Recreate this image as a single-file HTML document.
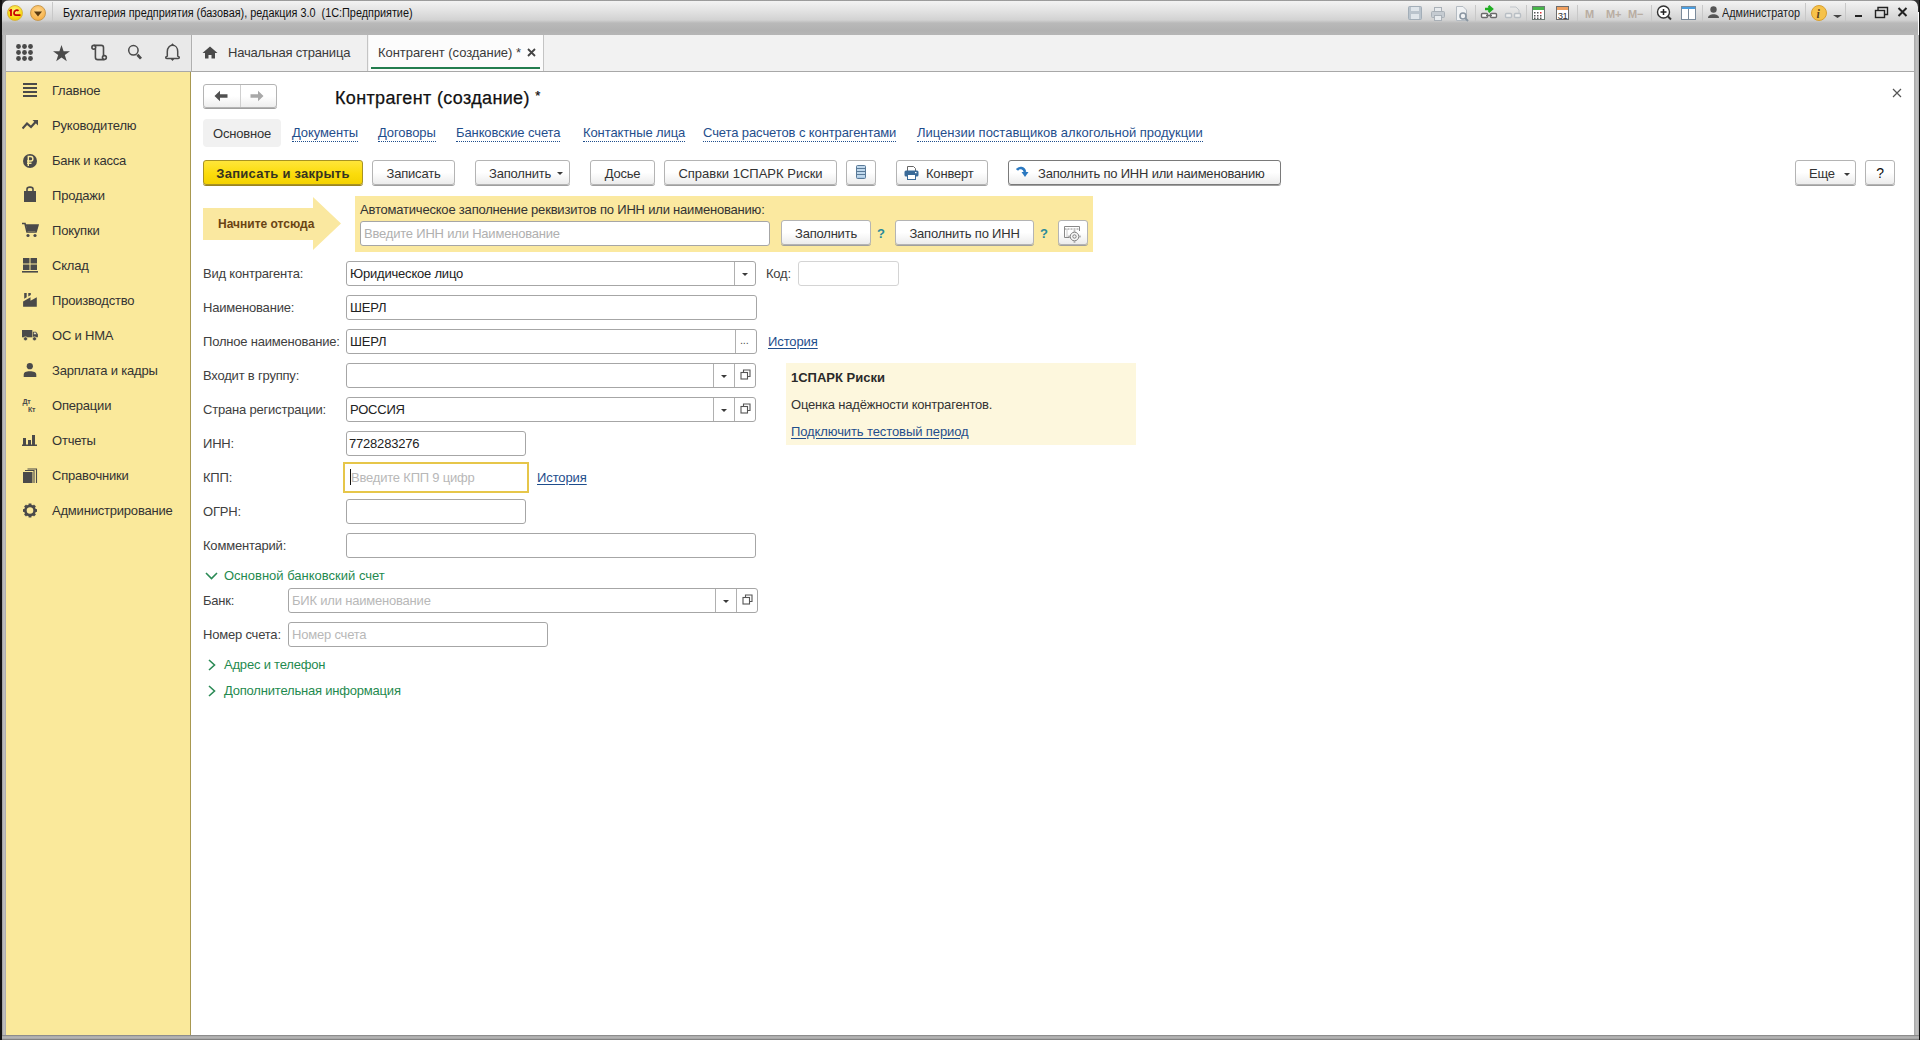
<!DOCTYPE html>
<html><head><meta charset="utf-8">
<style>
*{box-sizing:border-box;margin:0;padding:0}
html,body{width:1920px;height:1040px;overflow:hidden;background:#fff;font-family:"Liberation Sans",sans-serif;font-size:13px;color:#404040;letter-spacing:-0.2px}
.a{position:absolute}
#frameL{left:0;top:35px;width:6px;height:1005px;background:linear-gradient(to right,#111 0,#111 2px,#9a9a9a 2px,#c4c4c4 4px,#a8a8a8 6px)}
#blkL{left:0;top:0;width:2px;height:1040px;background:#111}
#blkR{left:1919px;top:0;width:1px;height:1040px;background:#111}
#frameR{left:1914px;top:35px;width:5px;height:1005px;background:linear-gradient(to right,#a6a6a6 0,#c4c4c4 3px,#a8a8a8 5px)}
#frameB{left:0;top:1035px;width:1920px;height:5px;background:linear-gradient(to bottom,#8c8c8c 0,#8c8c8c 1px,#a9a9a9 1px,#b6b6b6 3px,#9a9a9a 4px,#6a6a6a 5px)}
#title{left:2px;top:0;width:1916px;height:35px;background:linear-gradient(to bottom,#707070 0,#f2f2f2 1.5px,#e4e4e4 10px,#d2d2d2 20px,#b9b9b9 23px,#b2b2b2 30px,#b6b6b6 35px);border-radius:7px 7px 0 0}
#tabbar{left:6px;top:35px;width:1908px;height:37px;background:#f2f2f2;border-bottom:1px solid #a8a8a8}
#sidebar{left:6px;top:72px;width:185px;height:963px;background:#fae99b;border-right:1px solid #a89850}
.side{left:52px;font-size:13px;color:#333}
.si{left:22px;width:17px;height:17px}
.lbl{left:203px;color:#404040}
.inp{background:#fff;border:1px solid #a6a6a6;border-radius:3px;height:25px}
.btn{height:25px;border:1px solid #b4b4b4;border-radius:3px;background:linear-gradient(#fff 0,#fff 50%,#ececec 100%);box-shadow:0 1px 0 #9f9f9f;color:#333;text-align:center;line-height:25px;white-space:nowrap}
.link{color:#1f4e8c;border-bottom:1px dotted #1f4e8c;line-height:13px;padding-bottom:2px;letter-spacing:-0.1px}
.ulink{color:#1f4e8c;text-decoration:underline;text-underline-offset:2px;letter-spacing:-0.1px}
.grp{color:#1f8a4f;letter-spacing:0}
.t{white-space:nowrap}
.val{color:#222}
</style></head><body>
<div class="a" style="left:0;top:0;width:12px;height:12px;background:#333"></div><div class="a" style="left:1908px;top:0;width:12px;height:12px;background:#333"></div>
<div id="title" class="a"></div>
<div id="tabbar" class="a"></div>
<div id="sidebar" class="a"></div>

<!-- title bar content -->
<div class="a" style="left:7px;top:5px;width:16px;height:16px;border-radius:50%;background:radial-gradient(circle at 50% 35%,#fff68a,#f6d400 70%,#e0b000);border:1px solid #d8b440"></div>
<svg class="a" style="left:8px;top:9px" width="14" height="8" viewBox="0 0 14 8"><path d="M1.5 2 L3 1 L3 7" stroke="#d00000" stroke-width="1.8" fill="none"/><path d="M10.5 1.8 C9.5 0.8,6 1,6 4 C6 5.5,6.8 6.2,8 6.2 H12.5" stroke="#c80000" stroke-width="1.7" fill="none"/></svg>
<div class="a" style="left:30px;top:5px;width:16px;height:16px;border-radius:50%;background:radial-gradient(circle at 50% 35%,#ffd890,#f7b148 75%,#e09a30);border:1px solid #c99a50"></div>
<svg class="a" style="left:33px;top:11px" width="10" height="6" viewBox="0 0 10 6"><path d="M1 0.5 L9 0.5 L5 5.5 Z" fill="#5a3a10"/></svg>
<div class="a" style="left:52px;top:2px;width:1px;height:20px;background:#c8c8c8"></div>
<div class="a t" style="left:63px;top:6px;font-size:12px;color:#111;letter-spacing:0;transform-origin:0 0;transform:scaleX(0.905)">Бухгалтерия предприятия (базовая), редакция 3.0&nbsp; (1С:Предприятие)</div>

<!-- tab bar -->
<div class="a" style="left:6px;top:35px;width:186px;height:36px;background:#e9e9e9;border-right:1px solid #b0b0b0"></div>
<div class="a" style="left:193px;top:35px;width:175px;height:36px;background:#f0f0f0;border-right:1px solid #c4c4c4"></div>
<div class="a" style="left:369px;top:35px;width:175px;height:36px;background:#fcfcfc;border-right:1px solid #c4c4c4"></div>
<div class="a" style="left:371px;top:67px;width:169px;height:2px;background:#237d4e"></div>

<!-- title right icons -->
<svg class="a" style="left:1406px;top:4px" width="250" height="18" viewBox="0 0 250 18">
 <g fill="#b9c3cc" stroke="#a3aeb8" stroke-width="1">
  <rect x="2.5" y="2.5" width="13" height="13" rx="1"/>
 </g>
 <rect x="5" y="3" width="8" height="4" fill="#dfe5ea"/><rect x="5" y="10" width="8" height="5" fill="#dfe5ea"/>
 <g fill="#c5cbd1" stroke="#a9b0b7"><rect x="25.5" y="7.5" width="13" height="6" rx="1"/><rect x="28.5" y="3.5" width="7" height="4" fill="#e8ebee"/><rect x="28.5" y="11.5" width="7" height="5" fill="#e8ebee"/></g>
 <g stroke="#b4bbc2" fill="#f0f2f4"><path d="M50.5 2.5 H57 L60.5 6 V16.5 H50.5 Z"/></g>
 <circle cx="57" cy="12" r="3" fill="none" stroke="#8a96a2" stroke-width="1.6"/><path d="M59 14 L62 17" stroke="#8a96a2" stroke-width="2"/>
 <rect x="69" y="1" width="1" height="16" fill="#c8c8c8"/>
 <path d="M79 5 H85 M82.5 2 L86 5 L82.5 8" stroke="#1fae22" stroke-width="2.4" fill="none"/>
 <rect x="75.5" y="9.5" width="6" height="4" rx="1" fill="#fff" stroke="#6a6a6a" stroke-width="1.4"/><rect x="84.5" y="9.5" width="6" height="4" rx="1" fill="#fff" stroke="#6a6a6a" stroke-width="1.4"/><path d="M80 11.5 H86" stroke="#6a6a6a" stroke-width="1.4"/>
 <rect x="99.5" y="9.5" width="6" height="4" rx="1" fill="#f0f0f0" stroke="#b8bec4" stroke-width="1.4"/><rect x="108.5" y="9.5" width="6" height="4" rx="1" fill="#f0f0f0" stroke="#b8bec4" stroke-width="1.4"/><path d="M104 3 H110 L113 6 V9" stroke="#c0c5ca" fill="none"/>
 <rect x="120" y="1" width="1" height="16" fill="#c8c8c8"/>
 <rect x="126.5" y="2.5" width="12" height="13" fill="#fff" stroke="#6c7a74"/><rect x="127" y="3" width="11" height="3" fill="#48b54a"/>
 <g fill="#555"><rect x="128" y="8" width="1.5" height="1.5"/><rect x="131" y="8" width="1.5" height="1.5"/><rect x="134" y="8" width="1.5" height="1.5" fill="#d33"/><rect x="128" y="11" width="1.5" height="1.5"/><rect x="131" y="11" width="1.5" height="1.5"/><rect x="134" y="11" width="1.5" height="1.5"/><rect x="128" y="13.5" width="1.5" height="1.5"/><rect x="131" y="13.5" width="1.5" height="1.5"/><rect x="134" y="13.5" width="1.5" height="1.5"/></g>
 <rect x="150.5" y="2.5" width="12" height="13" fill="#fff" stroke="#6c6c6c"/><rect x="151" y="3" width="11" height="3" fill="#f0a060"/>
 <text x="151.8" y="15" font-family="Liberation Sans" font-size="9.5" fill="#333" letter-spacing="-0.5">31</text>
 <rect x="171" y="1" width="1" height="16" fill="#c8c8c8"/>
 <text x="179" y="14" font-family="Liberation Sans" font-size="11" font-weight="bold" fill="#b9ada2">M</text>
 <text x="200" y="14" font-family="Liberation Sans" font-size="11" font-weight="bold" fill="#b9ada2">M+</text>
 <text x="222" y="14" font-family="Liberation Sans" font-size="11" font-weight="bold" fill="#b9ada2">M−</text>
 <rect x="245" y="1" width="1" height="16" fill="#c8c8c8"/>
</svg>
<svg class="a" style="left:1656px;top:4px" width="264" height="18" viewBox="0 0 264 18">
 <circle cx="7.5" cy="8" r="6" fill="#fff" stroke="#333" stroke-width="1.4"/><path d="M7.5 5 V11 M4.5 8 H10.5" stroke="#222" stroke-width="1.5"/><path d="M12 12.5 L15 15.5" stroke="#333" stroke-width="2"/>
 <rect x="25.5" y="2.5" width="14" height="13" fill="#fff" stroke="#7a8a9a"/><rect x="26" y="3" width="13" height="2" fill="#4a9ee0"/><path d="M32.5 5 V15.5" stroke="#7a8a9a"/>
 <rect x="46" y="1" width="1" height="16" fill="#c8c8c8"/>
 <circle cx="57.5" cy="5.5" r="3.2" fill="#555"/><path d="M52 14 C52 9,63 9,63 14 Z" fill="#555"/>
</svg>
<div class="a t" style="left:1722px;top:6px;font-size:12px;color:#222;letter-spacing:0;transform-origin:0 0;transform:scaleX(0.9)">Администратор</div>
<svg class="a" style="left:1804px;top:3px" width="114" height="20" viewBox="0 0 114 20">
 <rect x="1" y="0" width="1" height="18" fill="#c8c8c8"/>
 <circle cx="15" cy="10" r="7.5" fill="#f6c24a" stroke="#d9a030"/>
 <text x="12.5" y="14.5" font-family="Liberation Serif" font-size="12" font-style="italic" font-weight="bold" fill="#5a4020">i</text>
 <path d="M29 12 H38 L33.5 15 Z" fill="#444"/>
 <rect x="41" y="0" width="1" height="18" fill="#c8c8c8"/>
 <rect x="51" y="12" width="7" height="2" fill="#222"/>
 <rect x="71.5" y="7.5" width="9" height="7" fill="none" stroke="#222" stroke-width="1.4"/><path d="M74 7.5 V4.5 H83.5 V11.5 H80.5" fill="none" stroke="#222" stroke-width="1.4"/>
 <path d="M94.5 5 L102.5 13 M102.5 5 L94.5 13" stroke="#222" stroke-width="2"/>
</svg>

<!-- tab bar icons -->
<svg class="a" style="left:14px;top:42px" width="175" height="22" viewBox="0 0 175 22">
 <g fill="#4a4a4a">
  <circle cx="4.5" cy="4.5" r="2.4"/><circle cx="10.5" cy="4.5" r="2.4"/><circle cx="16.5" cy="4.5" r="2.4"/>
  <circle cx="4.5" cy="10.5" r="2.4"/><circle cx="10.5" cy="10.5" r="2.4"/><circle cx="16.5" cy="10.5" r="2.4"/>
  <circle cx="4.5" cy="16.5" r="2.4"/><circle cx="10.5" cy="16.5" r="2.4"/><circle cx="16.5" cy="16.5" r="2.4"/>
  <path d="M47.5 3 L49.6 9.2 L56 9.2 L50.8 13 L52.8 19.2 L47.5 15.4 L42.2 19.2 L44.2 13 L39 9.2 L45.4 9.2 Z"/>
 </g>
 <g fill="none" stroke="#4a4a4a" stroke-width="1.6">
  <path d="M79.8 3.4 H87.3 Q89.5 3.4 89.5 5.6 V13.8 M81.4 7 V15.2 Q81.4 17.6 83.8 17.6 H90.4"/>
  <circle cx="79.8" cy="5.3" r="1.9"/><circle cx="90.4" cy="15.6" r="1.95"/>
  <circle cx="119.4" cy="8.3" r="4.7" stroke-width="1.5"/>
  <path d="M123.4 12.8 L127 16.6" stroke-width="2.8"/>
  <path d="M153.3 14 V9.5 C153.3 5.5,155.8 3.3,158.5 3.3 C161.2 3.3,163.7 5.5,163.7 9.5 V14 C165 14.5,165.3 15.2,165.3 15.8 C165.3 16.4,164.8 16.5,164.2 16.5 H152.8 C152.2 16.5,151.7 16.4,151.7 15.8 C151.7 15.2,152 14.5,153.3 14 Z" stroke-width="1.5"/>
 </g>
 <path d="M156.8 17 H160.2 L158.5 19 Z" fill="#4a4a4a"/><path d="M157 3 L158.5 1.3 L160 3 Z" fill="#4a4a4a"/>
</svg>
<svg class="a" style="left:202px;top:46px" width="16" height="13" viewBox="0 0 16 13"><path d="M8 0.5 L15.5 7 L13 7 L13 12.5 L9.5 12.5 L9.5 9 L6.5 9 L6.5 12.5 L3 12.5 L3 7 L0.5 7 Z" fill="#4a4a4a"/></svg>
<div class="a t" style="left:228px;top:45px;font-size:13px;color:#3a3a3a">Начальная страница</div>
<div class="a t" style="left:378px;top:45px;font-size:13px;color:#3a3a3a;letter-spacing:-0.05px">Контрагент (создание) *</div>
<svg class="a" style="left:527px;top:48px" width="9" height="9" viewBox="0 0 9 9"><path d="M1 1 L8 8 M8 1 L1 8" stroke="#444" stroke-width="1.8"/></svg>

<!-- sidebar -->
<div class="a side t" style="top:83px">Главное</div>
<div class="a side t" style="top:118px">Руководителю</div>
<div class="a side t" style="top:153px">Банк и касса</div>
<div class="a side t" style="top:188px">Продажи</div>
<div class="a side t" style="top:223px">Покупки</div>
<div class="a side t" style="top:258px">Склад</div>
<div class="a side t" style="top:293px">Производство</div>
<div class="a side t" style="top:328px">ОС и НМА</div>
<div class="a side t" style="top:363px">Зарплата и кадры</div>
<div class="a side t" style="top:398px">Операции</div>
<div class="a side t" style="top:433px">Отчеты</div>
<div class="a side t" style="top:468px">Справочники</div>
<div class="a side t" style="top:503px">Администрирование</div>

<svg class="a" style="left:22px;top:82px" width="17" height="440" viewBox="0 0 17 440">
 <g fill="#4a4a4a">
  <!-- hamburger y 82-97 -->
  <rect x="1" y="1" width="14" height="2"/><rect x="1" y="5" width="14" height="2"/><rect x="1" y="9" width="14" height="2"/><rect x="1" y="13" width="14" height="2"/>
 </g>
 <!-- trend y 120-130 => local 38-48 -->
 <path d="M0.5 46.5 L5 41.5 L9 45 L14 39.5" stroke="#4a4a4a" stroke-width="2.2" fill="none"/><path d="M10.5 38 L16 38 L16 43.5 Z" fill="#4a4a4a"/>
 <!-- ruble y 155-167 => 73-85 -->
 <circle cx="8" cy="79" r="7" fill="#4a4a4a"/><path d="M6.3 84 V74.5 H9 C11.5 74.5,11.5 79,9 79 H5 M5 81.3 H9.5" stroke="#fbeb9b" stroke-width="1.4" fill="none"/>
 <!-- bag y 187-202 => 105-120 -->
 <rect x="2" y="109" width="12" height="11" fill="#4a4a4a"/><path d="M5 110 V107 C5 104.5,11 104.5,11 107 V110" stroke="#4a4a4a" stroke-width="1.6" fill="none"/>
 <!-- cart y 222-237 => 140-155 -->
 <path d="M0 141.5 H3 L5 150 H14 L16 143 H4" stroke="#4a4a4a" stroke-width="1.6" fill="none"/><path d="M4 143 H16 L14.5 149 H5 Z" fill="#4a4a4a"/><circle cx="6" cy="153.5" r="1.6" fill="#4a4a4a"/><circle cx="13" cy="153.5" r="1.6" fill="#4a4a4a"/>
 <!-- sklad y 258-272 => 176-190 -->
 <g fill="#4a4a4a"><rect x="1" y="176" width="6.5" height="5.5"/><rect x="8.5" y="176" width="6.5" height="5.5"/><rect x="1" y="182.5" width="6.5" height="5.5"/><rect x="8.5" y="182.5" width="6.5" height="5.5"/><rect x="0" y="189" width="16" height="1.6"/></g>
 <!-- factory y 293-306 => 211-224 -->
 <path d="M1.1 224.7 V219.5 L8.5 215.3 V218.8 L14.8 215.2 V224.7 Z M2.2 211 H4.7 V215.3 L2.2 216.7 Z M6.3 211 H8.8 V213 L6.3 214.5 Z" fill="#4a4a4a"/>
 <!-- truck y 330-341 => 248-259 -->
 <rect x="0" y="248" width="10.3" height="7.3" fill="#4a4a4a"/><path d="M10.8 249.8 H14 L15.9 252.3 V255.3 H10.8 Z" fill="#4a4a4a"/><path d="M11.8 250.6 H13.5 L14.6 252.2 H11.8 Z" fill="#e8e0c0"/><circle cx="3.5" cy="256.8" r="2" fill="#4a4a4a" stroke="#fae99b" stroke-width="0.7"/><circle cx="12.5" cy="256.8" r="2" fill="#4a4a4a" stroke="#fae99b" stroke-width="0.7"/>
 <!-- person y 363-377 => 281-295 -->
 <circle cx="7.8" cy="284.2" r="3.1" fill="#4a4a4a"/><path d="M1.7 295 V293 C1.7 290,4 289.3,7.8 289.3 C11.6 289.3,14.3 290,14.3 293 V295 Z" fill="#4a4a4a"/>
 <!-- DtKt y 398-412 => 316-330 -->
 <text x="0.5" y="322" font-family="Liberation Sans" font-size="7" font-weight="bold" fill="#4a4a4a">Дт</text>
 <text x="6" y="330" font-family="Liberation Sans" font-size="7" font-weight="bold" fill="#4a4a4a">Кт</text>
 <!-- bars y 435-446 => 353-364 -->
 <g fill="#4a4a4a"><rect x="1" y="356" width="3" height="7"/><rect x="6" y="358" width="3" height="5"/><rect x="10" y="353" width="3" height="10"/><rect x="0" y="362.5" width="15" height="1.5"/></g>
 <!-- books y 469-483 => 387-401 -->
 <rect x="1" y="390" width="9.5" height="11" fill="#4a4a4a"/><path d="M12 401 V388.5 H3 M14.5 401 V387 H5.5" fill="none" stroke="#4a4a4a" stroke-width="1.1"/>
 <!-- gear y 504-517 => 422-435 -->
 <g transform="translate(8,428.5)"><circle r="4.6" fill="none" stroke="#4a4a4a" stroke-width="2.6"/>
  <g fill="#4a4a4a"><rect x="-1.4" y="-7" width="2.8" height="3"/><rect x="-1.4" y="4" width="2.8" height="3"/><rect x="-7" y="-1.4" width="3" height="2.8"/><rect x="4" y="-1.4" width="3" height="2.8"/>
  <g transform="rotate(45)"><rect x="-1.4" y="-7" width="2.8" height="3"/><rect x="-1.4" y="4" width="2.8" height="3"/><rect x="-7" y="-1.4" width="3" height="2.8"/><rect x="4" y="-1.4" width="3" height="2.8"/></g></g></g>
</svg>

<!-- form header -->
<div class="a" style="left:203px;top:84px;width:74px;height:24px;border:1px solid #b4b4b4;border-radius:3px;background:linear-gradient(#fff,#fff 50%,#eeeeee);box-shadow:0 1px 0 #9f9f9f"></div>
<div class="a" style="left:240px;top:85px;width:1px;height:22px;background:#cfcfcf"></div>
<svg class="a" style="left:214px;top:90px" width="14" height="12" viewBox="0 0 14 12"><path d="M0.5 6 L6 0.8 V4.3 H13.5 V7.7 H6 V11.2 Z" fill="#505050"/></svg>
<svg class="a" style="left:250px;top:90px" width="14" height="12" viewBox="0 0 14 12"><path d="M13.5 6 L8 0.8 V4.3 H0.5 V7.7 H8 V11.2 Z" fill="#a8a8a8"/></svg>
<div class="a t" style="left:335px;top:88px;font-size:18px;color:#111;letter-spacing:0.35px;-webkit-text-stroke:0.25px #111">Контрагент (создание) <span style="font-size:13px;vertical-align:4px">*</span></div>
<svg class="a" style="left:1892px;top:88px" width="10" height="10" viewBox="0 0 10 10"><path d="M1 1 L9 9 M9 1 L1 9" stroke="#555" stroke-width="1.2"/></svg>

<!-- form tabs -->
<div class="a" style="left:203px;top:119px;width:78px;height:28px;background:#f1f1f1;border-radius:4px"></div>
<div class="a t" style="left:213px;top:126px;color:#333">Основное</div>
<div class="a t link" style="left:292px;top:126px">Документы</div>
<div class="a t link" style="left:378px;top:126px">Договоры</div>
<div class="a t link" style="left:456px;top:126px">Банковские счета</div>
<div class="a t link" style="left:583px;top:126px">Контактные лица</div>
<div class="a t link" style="left:703px;top:126px">Счета расчетов с контрагентами</div>
<div class="a t link" style="left:917px;top:126px;letter-spacing:0">Лицензии поставщиков алкогольной продукции</div>

<!-- command bar -->
<div class="a btn" style="left:203px;top:160px;width:160px;border-color:#a89322;background:linear-gradient(#ffe53a,#fbdc0c 55%,#f4d200);box-shadow:0 1px 0 #9a8420;font-weight:bold;color:#363320;letter-spacing:0.25px">Записать и закрыть</div>
<div class="a btn" style="left:372px;top:160px;width:83px">Записать</div>
<div class="a btn" style="left:475px;top:160px;width:95px;text-align:left;padding-left:13px">Заполнить</div>
<svg class="a" style="left:556px;top:171px" width="8" height="5"><path d="M1 1 H7 L4 4 Z" fill="#3a3a3a"/></svg>
<div class="a btn" style="left:590px;top:160px;width:65px">Досье</div>
<div class="a btn" style="left:664px;top:160px;width:173px;letter-spacing:0">Справки 1СПАРК Риски</div>
<div class="a btn" style="left:846px;top:160px;width:30px"></div>
<svg class="a" style="left:855px;top:164px" width="12" height="16" viewBox="0 0 12 16"><rect x="1.5" y="1.5" width="9" height="13" rx="1" fill="#a8c8e4" stroke="#5a7a98"/><path d="M2 4.5 H10 M2 7.5 H10 M2 10.5 H10" stroke="#5a7a98" stroke-width="1"/><path d="M2 3 H10 M2 6 H10 M2 9 H10 M2 12 H10" stroke="#d8e8f4" stroke-width="1"/></svg>
<div class="a btn" style="left:896px;top:160px;width:92px;text-align:left;padding-left:29px">Конверт</div>
<svg class="a" style="left:904px;top:166px" width="15" height="14" viewBox="0 0 15 14"><path d="M3.5 5 V0.5 H9.5 L11.5 2.5 V5" fill="#fff" stroke="#666" stroke-width="1"/><rect x="0.5" y="4.5" width="14" height="6" rx="1.5" fill="#3a6a98"/><rect x="3.5" y="8.5" width="8" height="5" fill="#fff" stroke="#3a6a98"/><rect x="11" y="6" width="1.5" height="1.2" fill="#fff"/></svg>
<div class="a btn" style="left:1008px;top:160px;width:273px;border-color:#7a7a7a;text-align:left;padding-left:29px">Заполнить по ИНН или наименованию</div>
<svg class="a" style="left:1016px;top:166px" width="14" height="14" viewBox="0 0 14 14"><path d="M1 4 C3 1,8 1,9 6" stroke="#2a78c0" stroke-width="2.6" fill="none"/><path d="M5.5 6 H12.5 L9 11 Z" fill="#2a78c0"/></svg>
<div class="a btn" style="left:1795px;top:160px;width:61px;text-align:left;padding-left:13px">Еще</div>
<svg class="a" style="left:1843px;top:172px" width="8" height="5"><path d="M1 1 H7 L4 4 Z" fill="#3a3a3a"/></svg>
<div class="a btn" style="left:1865px;top:160px;width:30px;color:#111;font-size:14px">?</div>

<!-- start here -->
<svg class="a" style="left:203px;top:197px" width="142" height="55" viewBox="0 0 142 55"><path d="M0 11 H110 V0 L138 26.5 L110 53 V43 H0 Z" fill="#fae8a0"/></svg>
<div class="a t" style="left:218px;top:217px;font-weight:bold;font-size:12px;color:#6a4414;letter-spacing:0">Начните отсюда</div>
<div class="a" style="left:355px;top:196px;width:738px;height:56px;background:#fbe9a0"></div>
<div class="a t" style="left:360px;top:202px;color:#333">Автоматическое заполнение реквизитов по ИНН или наименованию:</div>
<div class="a inp" style="left:360px;top:221px;width:410px;height:25px"></div>
<div class="a t" style="left:364px;top:226px;color:#b0b0b0">Введите ИНН или Наименование</div>
<div class="a btn" style="left:781px;top:220px;width:90px">Заполнить</div>
<div class="a t" style="left:877px;top:226px;color:#2a8a9a;font-weight:bold;font-size:13px">?</div>
<div class="a btn" style="left:895px;top:220px;width:139px">Заполнить по ИНН</div>
<div class="a t" style="left:1040px;top:226px;color:#2a8a9a;font-weight:bold;font-size:13px">?</div>
<div class="a btn" style="left:1058px;top:220px;width:30px"></div>
<svg class="a" style="left:1064px;top:225px" width="17" height="18" viewBox="0 0 17 18"><path d="M5.5 12.5 H0.5 V1.5 H15.5 V6" fill="none" stroke="#888"/><path d="M0.5 4 H15.5" stroke="#888" stroke-dasharray="2 1"/><path d="M3 4.5 V12" stroke="#999" stroke-dasharray="1 1"/>
<g transform="translate(10.5,11.5)"><g fill="none" stroke="#808080" stroke-width="1"><path d="M-0.9 -5.5 H0.9 M-0.9 5.5 H0.9 M-5.5 -0.9 V0.9 M5.5 -0.9 V0.9"/><circle r="4.3" fill="#f6f6f6"/><circle r="1.7"/></g></g></svg>

<!-- fields -->
<div class="a lbl t" style="top:266px">Вид контрагента:</div>
<div class="a inp" style="left:346px;top:261px;width:410px"></div>
<div class="a" style="left:734px;top:262px;width:1px;height:23px;background:#b0b0b0"></div>
<svg class="a" style="left:741px;top:272px" width="8" height="5"><path d="M1 1 H7 L4 4 Z" fill="#3a3a3a"/></svg>
<div class="a t val" style="left:350px;top:266px">Юридическое лицо</div>
<div class="a lbl t" style="left:766px;top:266px">Код:</div>
<div class="a inp" style="left:798px;top:261px;width:101px;border-color:#d4d4d4"></div>

<div class="a lbl t" style="top:300px">Наименование:</div>
<div class="a inp" style="left:346px;top:295px;width:411px"></div>
<div class="a t val" style="left:350px;top:300px">ШЕРЛ</div>

<div class="a lbl t" style="top:334px">Полное наименование:</div>
<div class="a inp" style="left:346px;top:329px;width:411px"></div>
<div class="a" style="left:735px;top:330px;width:1px;height:23px;background:#b0b0b0"></div>
<div class="a t" style="left:740px;top:334px;font-size:11px;color:#555">...</div>
<div class="a t val" style="left:350px;top:334px">ШЕРЛ</div>
<div class="a t ulink" style="left:768px;top:334px">История</div>

<div class="a lbl t" style="top:368px">Входит в группу:</div>
<div class="a inp" style="left:346px;top:363px;width:410px"></div>
<div class="a" style="left:713px;top:364px;width:1px;height:23px;background:#b0b0b0"></div>
<div class="a" style="left:734px;top:364px;width:1px;height:23px;background:#b0b0b0"></div>
<svg class="a" style="left:720px;top:374px" width="8" height="5"><path d="M1 1 H7 L4 4 Z" fill="#3a3a3a"/></svg>
<svg class="a" style="left:740px;top:369px" width="11" height="11" viewBox="0 0 11 11"><path d="M3.5 3.5 V1 H10 V7.5 H7.5" fill="none" stroke="#555" stroke-width="1.1"/><rect x="1" y="3.5" width="6.5" height="6.5" fill="none" stroke="#555" stroke-width="1.1"/></svg>

<div class="a lbl t" style="top:402px">Страна регистрации:</div>
<div class="a inp" style="left:346px;top:397px;width:410px"></div>
<div class="a" style="left:713px;top:398px;width:1px;height:23px;background:#b0b0b0"></div>
<div class="a" style="left:734px;top:398px;width:1px;height:23px;background:#b0b0b0"></div>
<svg class="a" style="left:720px;top:408px" width="8" height="5"><path d="M1 1 H7 L4 4 Z" fill="#3a3a3a"/></svg>
<svg class="a" style="left:740px;top:403px" width="11" height="11" viewBox="0 0 11 11"><path d="M3.5 3.5 V1 H10 V7.5 H7.5" fill="none" stroke="#555" stroke-width="1.1"/><rect x="1" y="3.5" width="6.5" height="6.5" fill="none" stroke="#555" stroke-width="1.1"/></svg>
<div class="a t val" style="left:350px;top:402px">РОССИЯ</div>

<div class="a lbl t" style="top:436px">ИНН:</div>
<div class="a inp" style="left:346px;top:431px;width:180px"></div>
<div class="a t val" style="left:349px;top:436px">7728283276</div>

<div class="a lbl t" style="top:470px">КПП:</div>
<div class="a" style="left:343px;top:462px;width:186px;height:31px;border:2px solid #e6c64a;border-radius:0;background:#fff"></div>
<div class="a" style="left:350px;top:469px;width:1px;height:16px;background:#111"></div>
<div class="a t" style="left:351px;top:470px;color:#b8b8b8">Введите КПП 9 цифр</div>
<div class="a t ulink" style="left:537px;top:470px">История</div>

<div class="a lbl t" style="top:504px">ОГРН:</div>
<div class="a inp" style="left:346px;top:499px;width:180px"></div>

<div class="a lbl t" style="top:538px">Комментарий:</div>
<div class="a inp" style="left:346px;top:533px;width:410px"></div>

<svg class="a" style="left:205px;top:572px" width="13" height="8" viewBox="0 0 13 8"><path d="M1 1 L6.5 6.5 L12 1" fill="none" stroke="#2a8a55" stroke-width="1.6"/></svg>
<div class="a t grp" style="left:224px;top:568px">Основной банковский счет</div>

<div class="a lbl t" style="top:593px">Банк:</div>
<div class="a inp" style="left:288px;top:588px;width:470px"></div>
<div class="a" style="left:715px;top:589px;width:1px;height:23px;background:#b0b0b0"></div>
<div class="a" style="left:736px;top:589px;width:1px;height:23px;background:#b0b0b0"></div>
<svg class="a" style="left:722px;top:599px" width="8" height="5"><path d="M1 1 H7 L4 4 Z" fill="#3a3a3a"/></svg>
<svg class="a" style="left:742px;top:594px" width="11" height="11" viewBox="0 0 11 11"><path d="M3.5 3.5 V1 H10 V7.5 H7.5" fill="none" stroke="#555" stroke-width="1.1"/><rect x="1" y="3.5" width="6.5" height="6.5" fill="none" stroke="#555" stroke-width="1.1"/></svg>
<div class="a t" style="left:292px;top:593px;color:#b8b8b8">БИК или наименование</div>

<div class="a lbl t" style="top:627px">Номер счета:</div>
<div class="a inp" style="left:288px;top:622px;width:260px"></div>
<div class="a t" style="left:292px;top:627px;color:#b8b8b8">Номер счета</div>

<svg class="a" style="left:208px;top:659px" width="8" height="12" viewBox="0 0 8 12"><path d="M1 1 L6.5 6 L1 11" fill="none" stroke="#2a8a55" stroke-width="1.6"/></svg>
<div class="a t grp" style="left:224px;top:657px;letter-spacing:-0.2px">Адрес и телефон</div>
<svg class="a" style="left:208px;top:685px" width="8" height="12" viewBox="0 0 8 12"><path d="M1 1 L6.5 6 L1 11" fill="none" stroke="#2a8a55" stroke-width="1.6"/></svg>
<div class="a t grp" style="left:224px;top:683px;letter-spacing:-0.2px">Дополнительная информация</div>

<!-- spark panel -->
<div class="a" style="left:786px;top:363px;width:350px;height:82px;background:#fdf7dd"></div>
<div class="a t" style="left:791px;top:370px;font-weight:bold;font-size:13px;color:#2a2a2a;letter-spacing:0">1СПАРК Риски</div>
<div class="a t" style="left:791px;top:397px;color:#333">Оценка надёжности контрагентов.</div>
<div class="a t ulink" style="left:791px;top:424px">Подключить тестовый период</div>
<div id="frameL" class="a"></div>
<div id="frameR" class="a"></div>
<div id="frameB" class="a"></div>
<div id="blkL" class="a"></div>
<div id="blkR" class="a"></div>
</body></html>
